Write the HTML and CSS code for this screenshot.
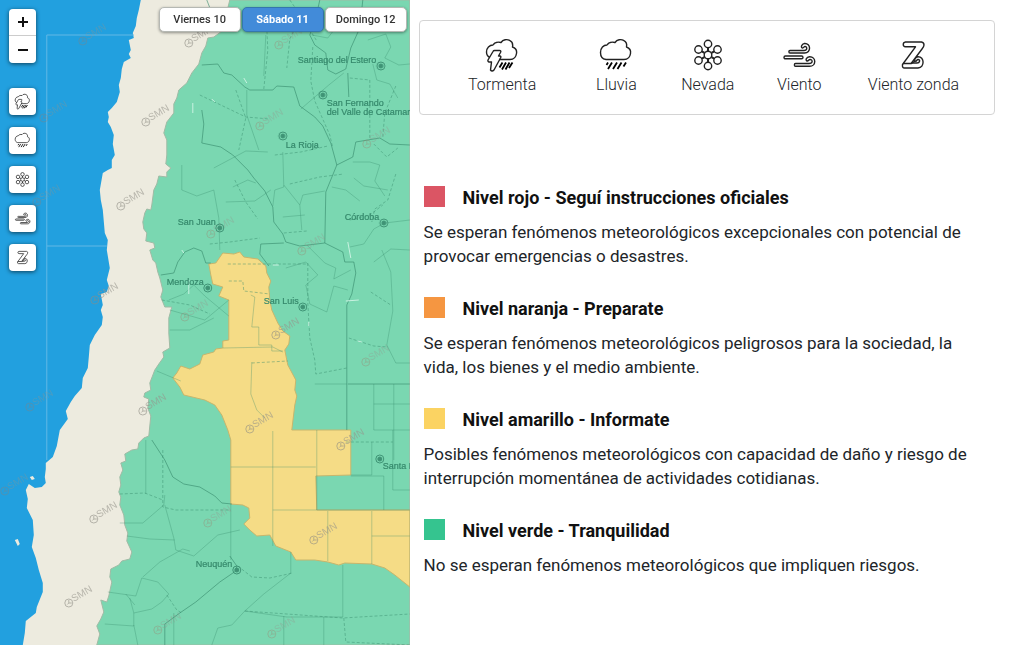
FILE: index.html
```html
<!DOCTYPE html>
<html lang="es">
<head>
<meta charset="utf-8">
<meta name="viewport" content="width=device-width, initial-scale=1">
<title>Alertas meteorológicas</title>
<link rel="stylesheet" href="styles.css">
</head>
<body>
<svg class="sprite" aria-hidden="true">
  <symbol id="cloud" viewBox="0 0 36 36">
    <path d="M8 22.5C4.500 22 2.500 19 2.500 15.500C2.500 11 5.500 8 9 8C10.500 5.500 14 4.500 17 5.500C19 2.500 23 1.700 26 3.700C28.500 5 29 7.500 28.500 10C31.500 11 33 13.500 32.500 16.500C32 20 29.500 22.500 26 22.500Z"/>
    <path class="rain" d="M10 25.500l-1.500 2.500M14 25.500l-4 6.500M19 25.500l-4 6.500M23.500 25.500l-4 6.500M28 25.500l-2.500 4"/>
  </symbol>
  <symbol id="storm" viewBox="0 0 36 36">
    <path d="M6 20.500C3.500 19.500 2.500 17.500 2.500 15C2.500 11 5.500 8 9 8C10.500 5.500 14 4.500 17 5.500C19 2.500 23 1.700 26 3.700C28.500 5 29 7.500 28.500 10C31.500 11 33 13.500 32.500 16.500C32 20 29.500 22.500 26 22.500H15"/>
    <path d="M9 14.500Q9.500 13.500 10.500 13.500H15.500Q17.500 13.500 16.500 15.500L14.500 19H16Q17.500 19.500 16.500 21L10 33Q8 35 6.500 33L7.500 25H5Q3.500 24.500 4 23Z"/>
    <path class="rain" d="M18.500 25.500l-3 5M22 25.500l-4 7M25.500 25.500l-4 7M28.500 25.500l-3.500 5.500"/>
  </symbol>
  <symbol id="snow" viewBox="0 0 36 36">
    <path class="bond" d="M18 10.500V14M18 22V25.500M11.800 14.300l2.700 1.600M21.500 20.100l2.700 1.600M24.200 14.300l-2.700 1.600M14.500 20.100l-2.700 1.600"/>
    <g><circle cx="18" cy="18" r="3.800"/><circle cx="18" cy="7" r="3.700"/><circle cx="18" cy="29" r="3.700"/><circle cx="8.500" cy="12.500" r="3.700"/><circle cx="27.500" cy="12.500" r="3.700"/><circle cx="8.500" cy="23.500" r="3.700"/><circle cx="27.500" cy="23.500" r="3.700"/></g>
  </symbol>
  <symbol id="wind" viewBox="0 0 36 36">
    <path d="M9 13.500H23C26.500 13.500 26.500 9.500 24 9.500C22.800 9.500 23 11 21.500 11C19.500 10.500 20.500 7 23.500 6.500C30 6 30.500 16 23.500 16H9C7.500 16 7.500 13.500 9 13.500Z"/>
    <rect x="3" y="19" width="19" height="2.800" rx="1.400"/>
    <path d="M14.500 26.500H28C32 26.500 32 22.500 29 22.500C27.500 22.500 27.700 24.300 26 24C24 23 25.500 20 28.500 19.700C35.500 19.500 35.500 29.300 28.500 29.300H14.500C13 29.300 13 26.500 14.500 26.500Z"/>
  </symbol>
  <symbol id="zonda" viewBox="0 0 36 36">
    <path d="M10.500 5H26.500Q29 5.500 29 8Q29 9.500 27 12L16.500 26H22C25 26 25.500 22.500 23 22.500C21.500 22.500 22 24.500 20.500 24.200C18.800 23.500 20 20.200 23 19.700C29.500 19.500 30 30.500 23 31H9.500Q7 31 7.500 27.500L20.500 9.800H10.500C7.500 9.500 7.500 5.500 10.500 5Z"/>
    <path d="M8 26.500H16.500L20 24"/>
  </symbol>
  <symbol id="mark" viewBox="0 0 40 24">
    <circle cx="5" cy="19" r="4"/><path d="M5 16v3h3M3.500 20.500L5 19"/>
    <text transform="rotate(-30 10 18)" x="10" y="18">SMN</text>
  </symbol>
  <symbol id="city" viewBox="0 0 10 10"><circle cx="5" cy="5" r="4"/><circle class="city-dot" cx="5" cy="5" r="2"/></symbol>
</svg>

<main class="page">
  <section class="map" aria-label="Mapa de alertas">
    <svg class="map-canvas" viewBox="0 0 410 645" preserveAspectRatio="xMidYMid slice">
      <path class="land" d="M141 0L139 10L137 18L136 26L133 33L134 38L129 40L131 50L129 54L131 58L124 62L122 69L121 78L119 85L120 92L117 102L112 108L108 112L109 117L108 122L111 127L114 135L113 144L115 155L112 160L112 168L108 170L103 173L100 190L101 200L103 210L105 233L108 240L107 250L110 268L107 280L109 286L107 292L101 294L103 305L101 310L103 317L102 325L95 335L90 345L89 357L88 368L83 378L82 388L75 396L71 402L66 411L68 419L60 430L57 446L53 457L46 463L46 469L45 477L46 483L42 487L35 488L29 484L26 490L28 499L27 508L33 520L34 535L32 547L36 558L39 570L43 583L43 592L37 607L36 613L26 621L25 633L23 645H410V0Z"/>
      <path class="land" d="M30 477l3-1 2 3-3 1zM15 540l3-1 2 5-2 2z"/>
      <path class="green" d="M230 0L228 8L231 14L221 32L214 37L208 38L206 46L202 53L199 64L192 73L187 83L179 90L177 98L174 104L174 113L167 122L164 133L167 140L167 155L166 164L171 168L167 172L167 177L159 176L157 184L154 190L152 205L151 210L147 209L145 213L143 222L144 229L147 233L146 241L154 243L155 248L150 250L153 260L156 263L158 272L160 278L163 290L161 297L165 307L172 307L169 318L169 333L170 348L163 352L164 357L159 364L155 370L150 383L151 390L145 393L144 397L149 399L148 408L151 416L149 436L144 438L139 443L138 449L132 450L125 454L126 461L121 463L123 470L120 477L121 485L119 492L121 497L120 505L124 515L125 525L128 533L127 541L132 552L130 559L122 561L119 565L111 569L110 577L112 582L109 596L107 602L101 600L104 612L101 619L97 626L100 634L97 645H410V0Z"/>
      <path class="yellow" d="M209 264L216 263L223 253L234 254L240 252L244 257L258 259L266 266L267 273L271 281L269 287L270 300L272 310L278 323L283 331L290 336L289 344L285 350L288 365L296 380L295 390L297 396L295 405L292 430H351V475L316 476L317 510H410V587L395 575L385 568L372 564L345 563L339 565L328 562L315 560L296 560L291 552L276 546L270 535L257 536L250 530L244 524L250 518L249 508L243 505L231 504V440L228 430L222 415L215 405L205 400L184 395L180 387L173 378L177 373L181 366L190 369L200 364L203 355L214 352L216 349L223 348V341L229 340V300L219 296L223 287L213 284L211 275Z"/>
      <g class="limits">
        <path class="strong" d="M202 65L218 64L224 73L232 75L245 87L250 90L273 90L277 86L294 87L300 106L315 117L323 126L331 143L337 165L326 192L325 243M202 110L204 124L202 143L221 147L233 155L248 170L254 178L265 191L273 207L274 222L283 234L286 242L300 246L325 243L343 252L345 262H354L356 273L352 294L347 305V430M337 165L353 157L356 142L380 138L390 144L410 145M320 0L316 18L310 35L315 45L326 53L328 70L336 74L346 69L351 48L360 28L363 0M348 73L349 97M161 275L174 273L178 262L185 252L194 248L202 251L206 263H211M261 244L260 254L269 266M261 244L284 243M348 384H410M152 440L165 460L173 477L184 484L200 487L215 496L222 503L232 504M165 645L165 624L180 613L196 602L220 582L236 571L237 566L230 556M207 0L214 18L223 25"/>
        <path d="M214 168L246 151L268 152M283 152L284 187L275 190L273 206M182 165V190L197 196L214 190L219 218L220 250M226 202L255 201L271 190M247 90L247 115L259 150M264 76L266 35M301 109L329 85L344 73M353 162L370 162L380 165L375 181L385 196M354 178L364 186L388 190M332 187L346 190L360 201M300 205L303 195L325 191M284 185L300 205L302 230M307 245L325 263L336 268L334 279L351 270M286 268L306 262L318 275L306 285L310 304L327 312L334 286L348 290M251 295L255 297M315 384H347M374 384V430L410 430M394 384V460M374 404H410M372 442V475H351M393 430V490H410M384 476V510M351 476H384M273 431V546M231 467H316M317 430V510M328 511V561M372 511V564M372 536H410M273 510H410M146 440V494M120 523L143 523L164 505L165 495M165 505L174 538L176 550L194 556L218 535L240 530M127 536L150 539L175 540M143 577L160 562L183 549L190 551M142 578L136 596L108 592M142 578L158 582L169 594L162 602L152 609L134 613L130 598M134 613V626L105 624M134 625L138 645M231 504V560M291 552V573L264 594L245 611L287 617L343 617V565M284 616V645M324 617V645M174 613V645M245 611L232 625L218 628L212 645M169 300L184 294L194 285L205 296L229 316M170 310L205 320L229 300M170 330H190L214 318M255 297L252 327H259V345H272V351H283M223 348L273 347L283 352M252 362L251 394L257 410L265 418M157 371L181 381M126 594L135 605M233 187L248 180L256 183M283 217L305 215M350 247L364 244L374 229L385 223L410 220M374 262L391 249L410 250M382 250L391 272L393 311L387 345L396 363H410M312 35L328 38L338 25L347 17M368 40L386 34L391 47L385 58L399 65L410 64M373 64L377 80L390 84L398 98"/>
        <path class="dashed" d="M200 95L221 105L246 117L270 119M264 89L268 50L267 28M300 18L290 39L287 68M313 47L311 81L315 101L330 135L333 148M350 78L370 80V140M235 180L246 202L258 219M284 233L307 231M290 184L320 177L344 174M350 220L370 215L383 205M374 144L387 157L398 148M275 155L301 152L328 146M162 300L190 305L210 314M229 281H243L244 291L270 294M252 363L288 361M308 263V303L310 338L315 360L316 374L347 368M228 264H308M349 338L374 346L388 347M163 450V507L176 510H231M120 494L145 493L163 500M167 595L177 610L182 613M238 566L252 577L270 578L293 573M245 611L343 618L410 614M344 618L346 642L410 645M210 244L230 242L260 238M290 0L304 20L317 41M396 86L385 113L383 137M371 292L391 305M396 174L388 200L375 209L372 222M346 442H393M236 90L246 118L239 150"/>
      </g>
      <path class="graticule" d="M47 35H134M47 35V460M47 246H107"/>
      <path class="glint" d="M244 78l3 5M212 99l3 3M193 103v10M348 242l3 16M359 300l-13 1M273 265h6M189 280v14M182 250l2 3M309 322v4M358 341l4 1"/>
      <g class="marks">
        <use href="#mark" x="184" y="24" width="40" height="24"/><use href="#mark" x="141" y="103" width="40" height="24"/><use href="#mark" x="116" y="187" width="40" height="24"/><use href="#mark" x="90" y="281" width="40" height="24"/><use href="#mark" x="138" y="392" width="40" height="24"/><use href="#mark" x="89" y="500" width="40" height="24"/><use href="#mark" x="64" y="584" width="40" height="24"/><use href="#mark" x="245" y="410" width="40" height="24"/><use href="#mark" x="336" y="427" width="40" height="24"/><use href="#mark" x="309" y="521" width="40" height="24"/><use href="#mark" x="271" y="316" width="40" height="24"/>
      </g>
      <g class="marks faint">
        <use href="#mark" x="78" y="22" width="40" height="24"/><use href="#mark" x="39" y="99" width="40" height="24"/><use href="#mark" x="32" y="183" width="40" height="24"/><use href="#mark" x="25" y="388" width="40" height="24"/><use href="#mark" x="0" y="472" width="40" height="24"/><use href="#mark" x="274" y="26" width="40" height="24"/><use href="#mark" x="255" y="107" width="40" height="24"/><use href="#mark" x="362" y="125" width="40" height="24"/><use href="#mark" x="206" y="215" width="40" height="24"/><use href="#mark" x="297" y="232" width="40" height="24"/><use href="#mark" x="180" y="298" width="40" height="24"/><use href="#mark" x="361" y="343" width="40" height="24"/><use href="#mark" x="203" y="504" width="40" height="24"/><use href="#mark" x="153" y="611" width="40" height="24"/><use href="#mark" x="267" y="615" width="40" height="24"/>
      </g>
      <g class="cities">
        <use href="#city" x="376" y="61" width="10" height="10"/><use href="#city" x="318" y="90" width="10" height="10"/><use href="#city" x="278" y="131" width="10" height="10"/><use href="#city" x="379" y="218" width="10" height="10"/><use href="#city" x="215" y="223" width="10" height="10"/><use href="#city" x="203" y="283" width="10" height="10"/><use href="#city" x="298" y="302" width="10" height="10"/><use href="#city" x="375" y="454" width="10" height="10"/><use href="#city" x="232" y="565" width="10" height="10"/>
      </g>
      <g class="places">
        <text x="298" y="63">Santiago del Estero</text><text x="327" y="106">San Fernando</text><text x="327" y="115">del Valle de Catamar</text><text x="286" y="148">La Rioja</text><text x="345" y="220">Córdoba</text><text x="178" y="225">San Juan</text><text x="167" y="285">Mendoza</text><text x="264" y="304">San Luis</text><text x="383" y="469">Santa R</text><text x="196" y="567">Neuquén</text>
      </g>
    </svg>

    <div class="tools">
      <div class="zoom">
        <button class="tool" type="button" aria-label="Acercar"><svg class="sign" viewBox="0 0 12 12"><path d="M1 6H11M6 1V11"/></svg></button>
        <button class="tool" type="button" aria-label="Alejar"><svg class="sign" viewBox="0 0 12 12"><path d="M1 6H11"/></svg></button>
      </div>
      <button class="tool" type="button" aria-label="Tormenta"><svg class="icon small"><use href="#storm"/></svg></button>
      <button class="tool" type="button" aria-label="Lluvia"><svg class="icon small"><use href="#cloud"/></svg></button>
      <button class="tool" type="button" aria-label="Nevada"><svg class="icon small"><use href="#snow"/></svg></button>
      <button class="tool" type="button" aria-label="Viento"><svg class="icon small"><use href="#wind"/></svg></button>
      <button class="tool" type="button" aria-label="Viento zonda"><svg class="icon small"><use href="#zonda"/></svg></button>
    </div>
    <div class="days">
      <button class="day" type="button">Viernes 10</button>
      <button class="day active" type="button" aria-pressed="true">Sábado 11</button>
      <button class="day" type="button">Domingo 12</button>
    </div>
  </section>

  <section class="info">
    <ul class="phenomena">
      <li><svg class="icon"><use href="#storm"/></svg><span>Tormenta</span></li>
      <li><svg class="icon"><use href="#cloud"/></svg><span>Lluvia</span></li>
      <li><svg class="icon"><use href="#snow"/></svg><span>Nevada</span></li>
      <li><svg class="icon"><use href="#wind"/></svg><span>Viento</span></li>
      <li><svg class="icon"><use href="#zonda"/></svg><span>Viento zonda</span></li>
    </ul>
    <div class="levels">
      <article class="level"><h2><i class="swatch red"></i>Nivel rojo - Seguí instrucciones oficiales</h2><p>Se esperan fenómenos meteorológicos excepcionales con potencial de provocar emergencias o desastres.</p></article>
      <article class="level"><h2><i class="swatch orange"></i>Nivel naranja - Preparate</h2><p>Se esperan fenómenos meteorológicos peligrosos para la sociedad, la vida, los bienes y el medio ambiente.</p></article>
      <article class="level"><h2><i class="swatch amber"></i>Nivel amarillo - Informate</h2><p>Posibles fenómenos meteorológicos con capacidad de daño y riesgo de interrupción momentánea de actividades cotidianas.</p></article>
      <article class="level"><h2><i class="swatch calm"></i>Nivel verde - Tranquilidad</h2><p>No se esperan fenómenos meteorológicos que impliquen riesgos.</p></article>
    </div>
  </section>
</main>
</body>
</html>
```
FILE: styles.css
```css
* { box-sizing: border-box; }
body { margin: 0; font-family: Roboto, "Liberation Sans", sans-serif; color: #212529; background: #fff; }
.sprite { position: absolute; width: 0; height: 0; }
.page { display: flex; min-height: 100vh; }

/* Map */
.map { position: relative; flex: 0 0 40%; overflow: hidden; background: #22a0df; }
.map-canvas { position: absolute; inset: 0; width: 100%; height: 100%; }
.land { fill: #edebdf; }
.green { fill: #7ad7b1; stroke: #a0bba5; stroke-width: 1; }
.yellow { fill: #f5dc86; stroke: #c7b66d; stroke-width: 1; }
.limits { fill: none; stroke: #35896a; stroke-opacity: 0.32; stroke-width: 1; stroke-linejoin: round; }
.strong { stroke-opacity: 0.6; }
.dashed { stroke-opacity: 0.45; stroke-dasharray: 3 2; }
.graticule { fill: none; stroke: #63b8e5; stroke-width: 1; }
.glint { fill: none; stroke: #c9f2e1; stroke-width: 1; }
.marks { fill: none; stroke: #8e8c84; stroke-width: 1; opacity: 0.6; }
#mark text { fill: #96948c; stroke: none; font-family: "Liberation Sans", sans-serif; font-size: 10px; }
.faint { opacity: 0.35; stroke: #a07a68; }
.cities { fill: none; stroke: #3f9375; stroke-width: 1; }
.city-dot { fill: #3f9375; }
.places { font-family: "Liberation Sans", sans-serif; font-size: 9px; fill: #35886b; stroke: #35886b; stroke-width: 0.2; }

/* Map controls */
.tools { position: absolute; left: 9px; top: 9px; display: flex; flex-direction: column; gap: 12px; }
.zoom { margin-bottom: 13px; border-radius: 4px; box-shadow: 0 1px 4px rgba(0, 0, 0, 0.6); }
.tool { display: flex; align-items: center; justify-content: center; width: 27px; height: 27px; padding: 0; border: 0; border-radius: 4px; background: #fff; box-shadow: 0 1px 4px rgba(0, 0, 0, 0.6); }
.zoom .tool { box-shadow: none; }
.zoom .tool:first-child { border-bottom: 1px solid #ccc; border-radius: 4px 4px 0 0; }
.zoom .tool:last-child { border-radius: 0 0 4px 4px; }
.sign { width: 12px; height: 12px; fill: none; stroke: #111; stroke-width: 2; }
.days { position: absolute; top: 7px; right: 3px; display: flex; gap: 1px; }
.day { width: 82px; height: 25px; padding: 0; border: 1px solid #b5b8b3; border-radius: 5px; background: #fff; color: #333; font: 500 11px/23px Roboto, sans-serif; box-shadow: 0 1px 3px rgba(0, 0, 0, 0.4); }
.day.active { background: #428bd9; border-color: #3477ac; color: #fff; font-weight: 700; }

/* Icons */
.icon { width: 36px; height: 36px; fill: none; stroke: #222; stroke-width: 1.4px; stroke-linejoin: round; }
.rain { stroke: #000; stroke-width: 1.8px; }
.bond { stroke-width: 2px; }
.small { width: 17px; height: 17px; stroke: #333; stroke-width: 1.7px; }

/* Legend */
.info { flex: 1; min-width: 0; padding: 20px 29px 20px 9px; }
.phenomena { display: grid; grid-template-columns: 3fr 2fr 2fr 2fr 3fr; margin: 0; padding: 16px 12px 19px 14px; list-style: none; border: 1px solid #d4d4d4; border-radius: 4px; }
.phenomena li { display: flex; flex-direction: column; align-items: center; gap: 2px; font-size: 16px; font-weight: 300; line-height: 20px; white-space: nowrap; }
.levels { display: flex; flex-direction: column; gap: 27px; padding: 69px 16px 0 5px; }
.level h2 { display: flex; align-items: flex-start; gap: 18px; margin: 0 0 8px; font-size: 18px; font-weight: 700; line-height: 28px; color: #111; }
.level p { margin: 0; font-size: 17px; line-height: 24px; }
.swatch { width: 21px; height: 21px; margin-top: 2px; }
.red { background: #db5564; }
.orange { background: #f59641; }
.amber { background: #fbd362; }
.calm { background: #35c48f; }
```
